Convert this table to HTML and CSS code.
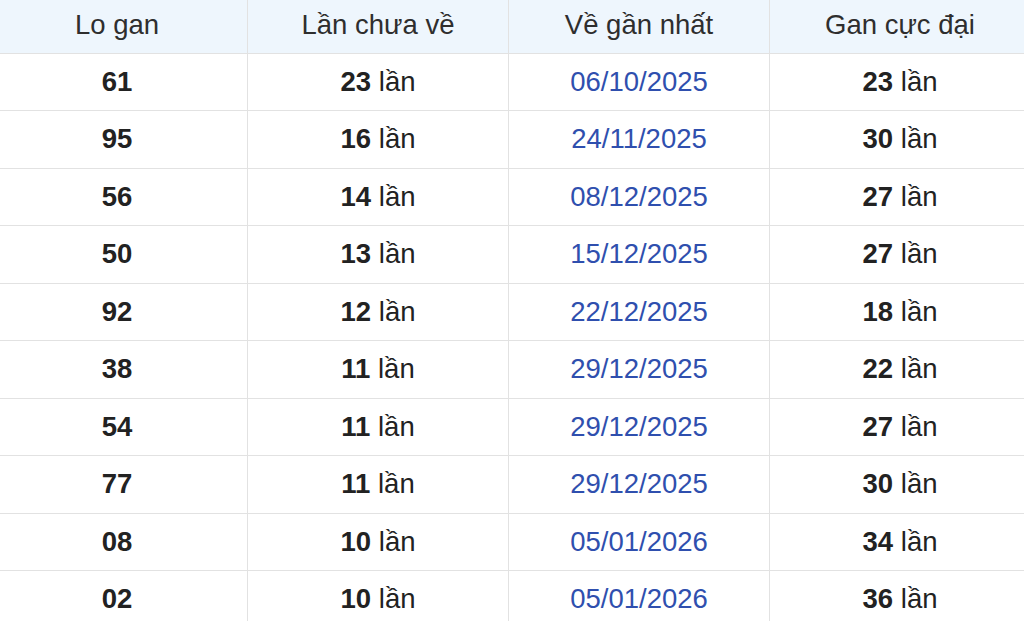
FILE: index.html
```html
<!DOCTYPE html>
<html lang="vi">
<head>
<meta charset="utf-8">
<title>Lo gan</title>
<link rel="stylesheet" href="styles.css">
</head>
<body>
<table class="gan-table">
  <thead>
    <tr>
      <th>Lo gan</th>
      <th>Lần chưa về</th>
      <th>Về gần nhất</th>
      <th>Gan cực đại</th>
    </tr>
  </thead>
  <tbody>
    <tr><td class="num">61</td><td><b>23</b> lần</td><td class="date">06/10/2025</td><td><b>23</b> lần</td></tr>
    <tr><td class="num">95</td><td><b>16</b> lần</td><td class="date">24/11/2025</td><td><b>30</b> lần</td></tr>
    <tr><td class="num">56</td><td><b>14</b> lần</td><td class="date">08/12/2025</td><td><b>27</b> lần</td></tr>
    <tr><td class="num">50</td><td><b>13</b> lần</td><td class="date">15/12/2025</td><td><b>27</b> lần</td></tr>
    <tr><td class="num">92</td><td><b>12</b> lần</td><td class="date">22/12/2025</td><td><b>18</b> lần</td></tr>
    <tr><td class="num">38</td><td><b>11</b> lần</td><td class="date">29/12/2025</td><td><b>22</b> lần</td></tr>
    <tr><td class="num">54</td><td><b>11</b> lần</td><td class="date">29/12/2025</td><td><b>27</b> lần</td></tr>
    <tr><td class="num">77</td><td><b>11</b> lần</td><td class="date">29/12/2025</td><td><b>30</b> lần</td></tr>
    <tr><td class="num">08</td><td><b>10</b> lần</td><td class="date">05/01/2026</td><td><b>34</b> lần</td></tr>
    <tr><td class="num">02</td><td><b>10</b> lần</td><td class="date">05/01/2026</td><td><b>36</b> lần</td></tr>
  </tbody>
</table>
</body>
</html>
```
FILE: styles.css
```css
html, body {
  margin: 0;
  padding: 0;
  background: #ffffff;
  overflow: hidden;
}

body {
  width: 1024px;
  height: 621px;
  font-family: "Liberation Sans", Arial, sans-serif;
  color: #1f1f1f;
}

.gan-table {
  margin-left: -14px;
  width: 1045px;
  border-collapse: collapse;
  table-layout: fixed;
  font-size: 27.5px;
}

.gan-table th,
.gan-table td {
  border: 1px solid #e2e2e2;
  text-align: center;
  vertical-align: middle;
  padding: 0;
}

.gan-table thead th {
  background: #eef6fd;
  font-weight: normal;
  color: #2e2e2e;
  height: 49.5px;
  border-top: none;
  padding-bottom: 3px;
}

.gan-table tbody td {
  height: 56.5px;
  color: #222;
}

.gan-table td.num {
  font-weight: bold;
}

.gan-table td b {
  font-weight: bold;
}

.gan-table td.date {
  color: #2f4fae;
}
```
